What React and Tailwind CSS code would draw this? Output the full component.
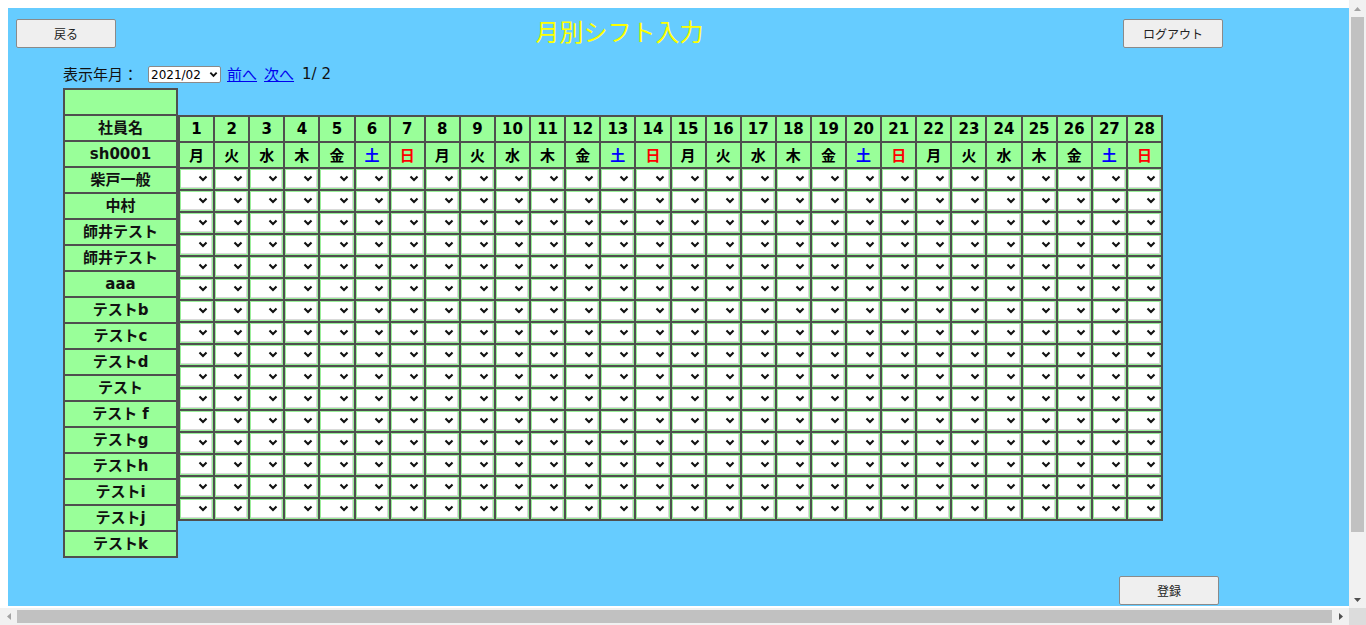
import React from 'react';

const FONT = { fontFamily: '"DejaVu Sans", "Noto Sans CJK JP", sans-serif' };
const JP = { fontFamily: '"Noto Sans CJK JP", "DejaVu Sans", sans-serif' };

const names = [
  '',
  '社員名',
  'sh0001',
  '柴戸一般',
  '中村',
  '師井テスト',
  '師井テスト',
  'aaa',
  'テストb',
  'テストc',
  'テストd',
  'テスト',
  'テスト f',
  'テストg',
  'テストh',
  'テストi',
  'テストj',
  'テストk'
];

const weekdays = ['月', '火', '水', '木', '金', '土', '日'];
const days = Array.from({ length: 28 }, (_, i) => i + 1);
const rows = Array.from({ length: 16 }, (_, i) => i);

function Chevron({ w = 10 }) {
  return (
    <svg width={w} height="7" viewBox="0 0 10 7" className="shrink-0">
      <path d="M1.5 1.5l3.5 3.5L8.5 1.5" fill="none" stroke="#111" strokeWidth="2.1" />
    </svg>
  );
}

function Btn({ children }) {
  return (
    <button
      className="w-[100px] h-[29px] bg-[#efefef] border border-[#8a8a8a] rounded-[2px] text-[12px] text-[#222] shrink-0"
      style={JP}
    >
      {children}
    </button>
  );
}

function dayColor(i) {
  if (i % 7 === 5) return 'text-[#0000ff]';
  if (i % 7 === 6) return 'text-[#ff0000]';
  return 'text-black';
}

function ShiftCell() {
  return (
    <div className="h-[22px] border-l-2 border-t-2 border-[#4f4f4f] bg-[#99ee99] px-px pt-px pb-px">
      <div className="h-full bg-white border-r border-b border-[#d9d9d9] flex items-center justify-end pr-[3px]">
        <Chevron />
      </div>
    </div>
  );
}

export default function App() {
  return (
    <div className="w-[1366px] h-[625px] bg-white flex flex-col overflow-hidden" style={FONT}>
      <div className="flex h-[608px]">
        <div className="pl-2 pt-2 pr-0 flex-1">
          <div className="w-[1341px] h-[598px] bg-[#66ccff] overflow-hidden flex flex-col">
            {/* top bar */}
            <div className="flex items-start pt-[11px] pl-2 pr-[126px]">
              <Btn>戻る</Btn>
              <div className="flex-1 text-center -mt-[1px] text-[24px] leading-[26px] text-[#ffff00]" style={JP}>
                月別シフト入力
              </div>
              <Btn>ログアウト</Btn>
            </div>

            {/* month selector */}
            <div className="flex items-center h-[17px] mt-[18px] pl-[55px] text-[15px] text-[#111]" style={JP}>
              <span>表示年月：</span>
              <div className="ml-[10px] w-[73px] h-[17px] bg-white border border-[#8a8a8a] rounded-[2px] flex items-center justify-between pl-[2px] pr-[2px] text-[12px] text-black" style={FONT}>
                <span className="leading-none">2021/02</span>
                <Chevron w={9} />
              </div>
              <a className="ml-[6px] text-[#0000ee] underline">前へ</a>
              <a className="ml-[7px] text-[#0000ee] underline">次へ</a>
              <span className="ml-[8px]" style={FONT}>1/ 2</span>
            </div>

            {/* tables */}
            <div className="flex items-start mt-[5px] pl-[55px]">
              <div className="w-[115px] border-r-2 border-b-2 border-[#4f4f4f]">
                {names.map((n, i) => (
                  <div
                    key={i}
                    className="h-[26px] border-l-2 border-t-2 border-[#4f4f4f] bg-[#99ff99] flex items-center justify-center font-bold text-[15px] text-[#111] whitespace-pre"
                  >
                    {n}
                  </div>
                ))}
              </div>

              <div className="mt-[27px] w-[985px] border-r-2 border-b-2 border-[#4f4f4f] grid grid-cols-[repeat(28,minmax(0,1fr))]">
                {days.map((d) => (
                  <div
                    key={'d' + d}
                    className="h-[26px] border-l-2 border-t-2 border-[#4f4f4f] bg-[#99ff99] flex items-center justify-center font-bold text-[15px] text-black"
                  >
                    {d}
                  </div>
                ))}
                {days.map((d, i) => (
                  <div
                    key={'w' + d}
                    className={`h-[26px] border-l-2 border-t-2 border-[#4f4f4f] bg-[#99ff99] flex items-center justify-center font-bold text-[15px] ${dayColor(i)}`}
                    style={JP}
                  >
                    {weekdays[i % 7]}
                  </div>
                ))}
                {rows.map((r) =>
                  days.map((d) => <ShiftCell key={r + '-' + d} />)
                )}
              </div>
            </div>

            {/* register */}
            <div className="flex-1" />
            <div className="flex justify-end pr-[130px] pb-[1px]">
              <Btn>登録</Btn>
            </div>
          </div>
        </div>

        {/* vertical scrollbar */}
        <div className="w-[17px] h-full bg-[#f1f1f1] flex flex-col items-center">
          <div className="h-[17px] flex items-center justify-center">
            <svg width="7" height="4" viewBox="0 0 7 4"><path d="M0 4L3.5 0L7 4z" fill="#a3a3a3" /></svg>
          </div>
          <div className="w-[13px] h-[515px] bg-[#c1c1c1]" />
          <div className="flex-1" />
          <div className="h-[17px] flex items-center justify-center">
            <svg width="7" height="4" viewBox="0 0 7 4"><path d="M0 0L3.5 4L7 0z" fill="#505050" /></svg>
          </div>
        </div>
      </div>

      {/* horizontal scrollbar */}
      <div className="flex h-[17px]">
        <div className="flex-1 bg-[#f1f1f1] flex items-center">
          <div className="w-[17px] flex items-center justify-center">
            <svg width="4" height="7" viewBox="0 0 4 7"><path d="M4 0L0 3.5L4 7z" fill="#a3a3a3" /></svg>
          </div>
          <div className="w-[1315px] h-[13px] bg-[#c1c1c1]" />
          <div className="flex-1" />
          <div className="w-[17px] flex items-center justify-center">
            <svg width="4" height="7" viewBox="0 0 4 7"><path d="M0 0L4 3.5L0 7z" fill="#505050" /></svg>
          </div>
        </div>
        <div className="w-[17px] bg-[#dcdcdc]" />
      </div>
    </div>
  );
}
